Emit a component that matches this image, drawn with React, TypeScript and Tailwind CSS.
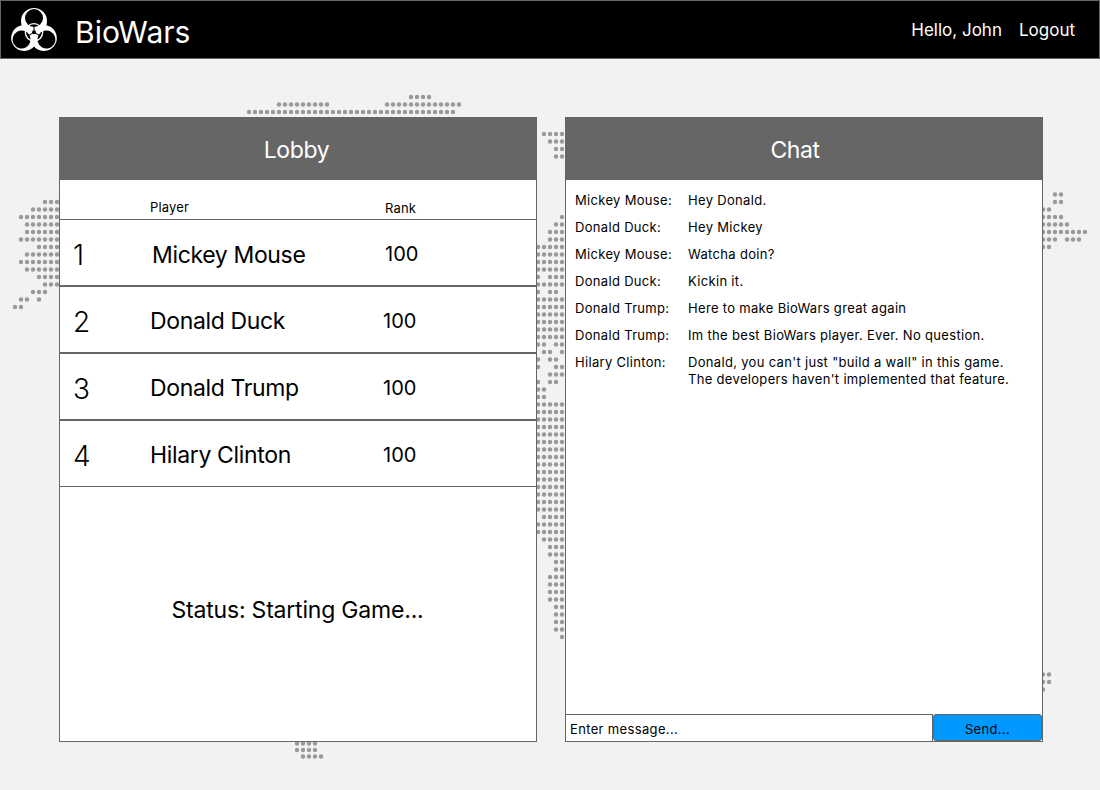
const players = [
  { pos: 1, name: "Mickey Mouse", rank: 100 },
  { pos: 2, name: "Donald Duck", rank: 100 },
  { pos: 3, name: "Donald Trump", rank: 100 },
  { pos: 4, name: "Hilary Clinton", rank: 100 },
];

const messages = [
  { from: "Mickey Mouse:", text: "Hey Donald." },
  { from: "Donald Duck:", text: "Hey Mickey" },
  { from: "Mickey Mouse:", text: "Watcha doin?" },
  { from: "Donald Duck:", text: "Kickin it." },
  { from: "Donald Trump:", text: "Here to make BioWars great again" },
  { from: "Donald Trump:", text: "Im the best BioWars player. Ever. No question." },
  {
    from: "Hilary Clinton:",
    text: "Donald, you can't just \"build a wall\" in this game.\nThe developers haven't implemented that feature.",
  },
];

// [y, first x, last x] runs of dots, 6px apart
const runs: number[][] = [
  // top edge
  [97, 411, 429], [104.5, 279, 327], [104.5, 387, 459], [112, 249, 453],
  // left edge
  [202, 45, 57], [209.5, 33, 57], [217, 21, 57], [224.5, 27, 57], [232, 27, 57],
  [239.5, 21, 57], [247, 39, 57], [254.5, 27, 57], [262, 21, 57], [269.5, 27, 57],
  [277, 39, 57], [284.5, 45, 57], [292, 33, 45], [299.5, 21, 27], [299.5, 39, 39], [307, 15, 21],
  // gap between the panels
  [134, 544, 562], [141.5, 550, 562], [149, 556, 562], [156.5, 556, 562],
  [217, 562, 562], [224.5, 556, 562], [232, 550, 562], [239.5, 550, 562],
  [247, 538, 562], [254.5, 538, 562], [262, 538, 562], [269.5, 538, 562],
  [277, 538, 538], [277, 550, 562], [284.5, 538, 562], [292, 538, 538], [292, 550, 556],
  [299.5, 538, 562], [307, 538, 562], [314.5, 538, 562], [322, 538, 562], [329.5, 538, 562],
  [337, 538, 562], [344.5, 538, 544], [344.5, 556, 562], [352, 544, 550], [352, 562, 562],
  [359.5, 538, 538], [359.5, 550, 556], [367, 538, 538], [367, 556, 562], [374.5, 550, 562],
  [382, 538, 538], [382, 550, 556], [389.5, 538, 544], [397, 538, 544],
  [404.5, 538, 562], [412, 538, 562], [419.5, 538, 562], [427, 538, 562], [434.5, 538, 562],
  [442, 538, 562], [449.5, 538, 562], [457, 538, 562], [464.5, 538, 562], [472, 538, 562],
  [479.5, 538, 562], [487, 538, 562], [494.5, 538, 562], [502, 538, 562], [509.5, 538, 562],
  [517, 544, 562], [524.5, 538, 562], [532, 538, 562], [539.5, 544, 562], [547, 550, 562],
  [554.5, 550, 562], [562, 556, 562], [569.5, 556, 562], [577, 550, 562], [584.5, 550, 562],
  [592, 550, 562], [599.5, 550, 562], [607, 556, 562], [614.5, 556, 562], [622, 556, 562],
  [629.5, 556, 562], [637, 562, 562],
  // right edge
  [194.5, 1055, 1061], [202, 1055, 1061], [209.5, 1043, 1049], [217, 1043, 1061],
  [224.5, 1043, 1067], [232, 1043, 1085], [239.5, 1043, 1055], [239.5, 1067, 1079], [247, 1043, 1049],
  [674.5, 1043, 1049], [682, 1043, 1049], [689.5, 1043, 1043],
  // below the lobby
  [743.5, 297, 315], [750, 297, 315], [756.5, 303, 321],
];

function MapDots() {
  const dots: number[][] = [];
  runs.forEach(([y, a, b]) => {
    for (let x = a; x <= b; x += 6) dots.push([x, y]);
  });
  return (
    <svg className="absolute inset-0 w-[1100px] h-[790px]" viewBox="0 0 1100 790">
      <defs>
        <filter id="soft">
          <feGaussianBlur stdDeviation="0.7" />
        </filter>
      </defs>
      <g filter="url(#soft)">
        {dots.map(([x, y]) => (
          <circle key={`${x}-${y}`} cx={x} cy={y} r="2.2" fill="#999999" />
        ))}
      </g>
    </svg>
  );
}

function BiohazardLogo() {
  const turns = [0, 120, 240];
  return (
    <svg className="w-[56px] h-[54px] shrink-0" viewBox="0 0 168 162">
      <g transform="translate(0 -2)">
        {turns.map((t) => (
          <circle key={t} cx="84" cy="56" r="39" fill="#fff" transform={`rotate(${t} 84 90)`} />
        ))}
        {turns.map((t) => (
          <circle key={t} cx="84" cy="47" r="27" fill="#000" transform={`rotate(${t} 84 90)`} />
        ))}
        <circle cx="84" cy="90" r="26" fill="none" stroke="#fff" strokeWidth="4" />
        {turns.map((t) => (
          <path key={t} d="M84 90V72" stroke="#000" strokeWidth="3" transform={`rotate(${t} 84 90)`} />
        ))}
        <circle cx="84" cy="90" r="6" fill="#000" />
      </g>
    </svg>
  );
}

function PanelHeader({ title, className }: { title: string; className: string }) {
  return (
    <div
      className={`h-[62px] shrink-0 bg-[#666666] flex items-center justify-center pt-[2px] text-[23px] tracking-[-0.4px] text-white ${className}`}
    >
      {title}
    </div>
  );
}

function PlayerRow({ pos, name, rank }: { pos: number; name: string; rank: number }) {
  const first = pos === 1;
  const last = pos === players.length;
  return (
    <div
      className={
        last
          ? "h-[66px] flex items-center border-b border-[#666666] text-black"
          : "h-[67px] flex items-center border-b-2 border-[#666666] text-black"
      }
    >
      <div className={first ? "w-[90px] pl-[13px] pt-[5px] text-[28px] font-light" : "w-[90px] pl-[13px] pt-[4px] text-[28px] font-light"}>
        {pos}
      </div>
      <div className={first ? "w-[233px] pl-[2px] pt-[5px] text-[23px] tracking-[-0.35px]" : "w-[233px] pt-[3px] text-[23px] tracking-[-0.35px]"}>
        {name}
      </div>
      <div className={first ? "pl-[2px] pt-[2px] text-[20px]" : "pt-[2px] text-[20px]"}>{rank}</div>
    </div>
  );
}

function Lobby() {
  return (
    <section className="w-[478px] h-[625px] flex flex-col bg-white border border-[#666666]">
      <PanelHeader title="Lobby" className="pr-[3px]" />
      <div className="h-[40px] shrink-0 flex items-end border-b border-[#666666] text-[13px] tracking-[0.15px] text-black">
        <div className="w-[90px]" />
        <div className="w-[235px] pb-[2px]">Player</div>
        <div className="pb-[1px]">Rank</div>
      </div>
      <div>
        {players.map((p) => (
          <PlayerRow key={p.pos} pos={p.pos} name={p.name} rank={p.rank} />
        ))}
      </div>
      <div className="flex-1 flex items-center justify-center pb-[7px] pr-[1px] text-[23px] tracking-[-0.2px] text-black">
        Status: Starting Game...
      </div>
    </section>
  );
}

function Chat() {
  return (
    <section className="w-[478px] h-[625px] flex flex-col bg-white border border-[#666666]">
      <PanelHeader title="Chat" className="pr-[18px]" />
      <div className="flex-1 pt-[12px] pl-[9px] flex flex-col gap-[10px] text-[13px] leading-[17px] tracking-[0.32px] text-black">
        {messages.map((m, i) => (
          <div key={i} className="flex">
            <div className="w-[113px] shrink-0">{m.from}</div>
            <div className="whitespace-pre-line">{m.text}</div>
          </div>
        ))}
      </div>
      <div className="h-[27px] shrink-0 flex text-[13px] tracking-[0.35px] text-black">
        <div className="w-[367px] border-t border-r border-[#666666] pl-[4px] pt-[3px] flex items-center bg-white">
          Enter message...
        </div>
        <button className="flex-1 bg-[#0099ff] border border-[#666666] rounded-[3px] pt-[4px] flex items-center justify-center">
          Send...
        </button>
      </div>
    </section>
  );
}

export default function App() {
  return (
    <div
      className="relative w-[1100px] h-[790px] overflow-hidden bg-[#f2f2f2]"
      style={{ fontFamily: "Inter, 'Liberation Sans', sans-serif" }}
    >
      <MapDots />
      <header className="relative h-[59px] bg-black border border-[#666666] flex items-center text-white">
        <div className="ml-[5px]">
          <BiohazardLogo />
        </div>
        <div className="ml-[13px] pt-[5px] text-[30px]">BioWars</div>
        <div className="ml-auto mr-[24px] pt-[2px] flex gap-[17px] text-[17px]">
          <span>Hello, John</span>
          <span>Logout</span>
        </div>
      </header>
      <main className="relative pt-[58px] pl-[59px] flex gap-[28px]">
        <Lobby />
        <Chat />
      </main>
    </div>
  );
}
